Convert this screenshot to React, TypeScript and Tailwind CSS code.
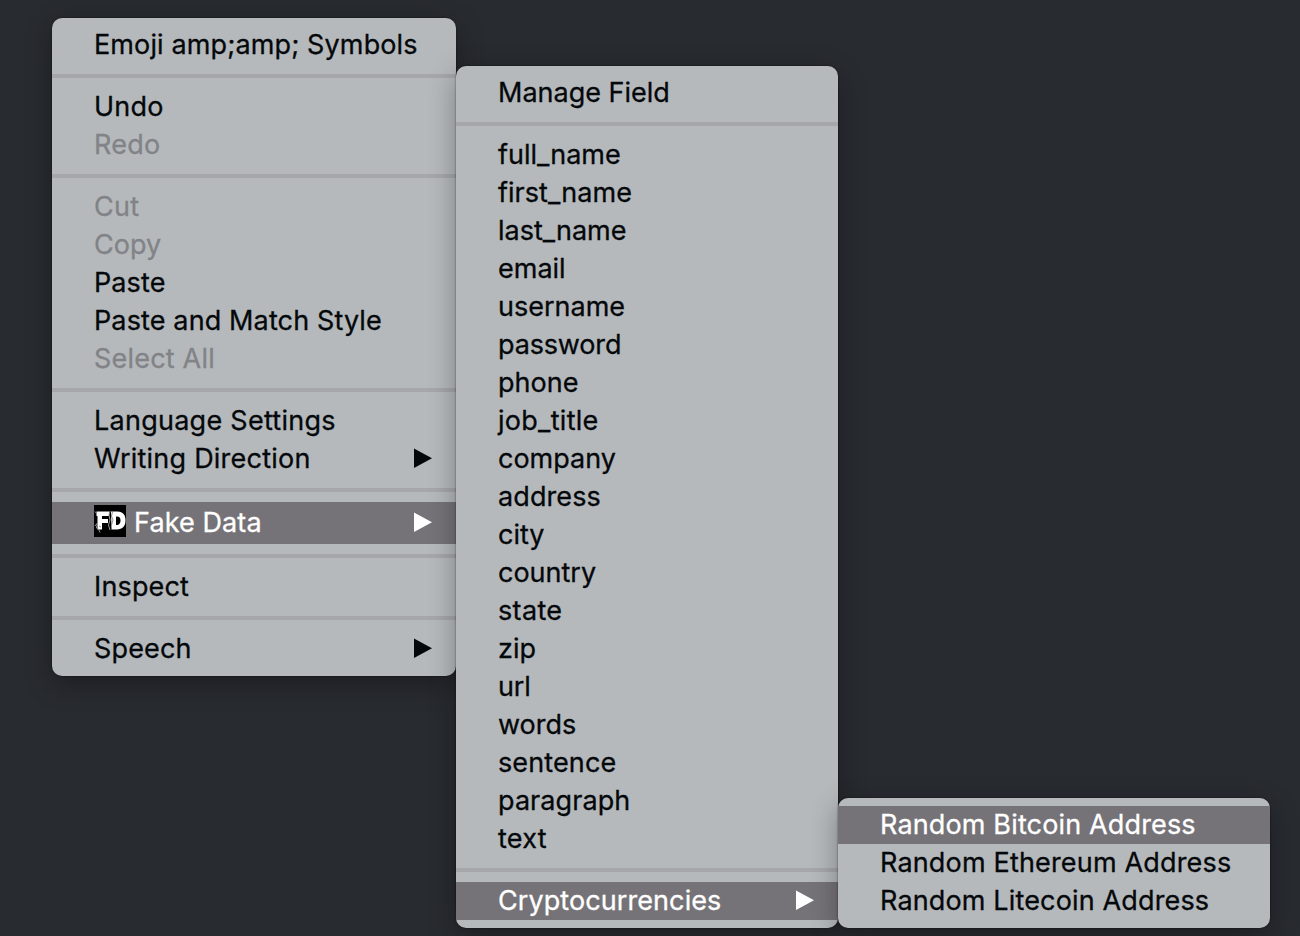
type Entry = {
  label?: string;
  track?: string;
  disabled?: boolean;
  active?: boolean;
  submenu?: boolean;
  logo?: boolean;
};

const SEP: Entry = {};

const mainMenu: Entry[] = [
  { label: 'Emoji amp;amp; Symbols', track: 'tracking-[0.12px]' },
  SEP,
  { label: 'Undo', track: 'tracking-[0.2px]' },
  { label: 'Redo', track: 'tracking-[0.25px]', disabled: true },
  SEP,
  { label: 'Cut', track: 'tracking-[0.3px]', disabled: true },
  { label: 'Copy', disabled: true },
  { label: 'Paste', track: 'tracking-[0.1px]' },
  { label: 'Paste and Match Style', track: 'tracking-[0.13px]' },
  { label: 'Select All', track: 'tracking-[0.2px]', disabled: true },
  SEP,
  { label: 'Language Settings', track: 'tracking-[0.26px]' },
  { label: 'Writing Direction', track: 'tracking-[0.23px]', submenu: true },
  SEP,
  { label: 'Fake Data', track: 'tracking-[0.1px]', submenu: true, active: true, logo: true },
  SEP,
  { label: 'Inspect', track: 'tracking-[0.15px]' },
  SEP,
  { label: 'Speech', track: 'tracking-[0.15px]', submenu: true },
];

const fieldMenu: Entry[] = [
  { label: 'Manage Field' },
  SEP,
  { label: 'full_name' },
  { label: 'first_name', track: 'tracking-[0.04px]' },
  { label: 'last_name' },
  { label: 'email' },
  { label: 'username' },
  { label: 'password', track: 'tracking-[-0.15px]' },
  { label: 'phone' },
  { label: 'job_title', track: 'tracking-[0.28px]' },
  { label: 'company' },
  { label: 'address', track: 'tracking-[0.1px]' },
  { label: 'city' },
  { label: 'country' },
  { label: 'state', track: 'tracking-[0.35px]' },
  { label: 'zip' },
  { label: 'url', track: 'tracking-[-0.2px]' },
  { label: 'words' },
  { label: 'sentence', track: 'tracking-[0.12px]' },
  { label: 'paragraph', track: 'tracking-[0.08px]' },
  { label: 'text', track: 'tracking-[0.25px]' },
  SEP,
  { label: 'Cryptocurrencies', track: 'tracking-[0.08px]', submenu: true, active: true },
];

const cryptoMenu: Entry[] = [
  { label: 'Random Bitcoin Address', track: 'tracking-[0.15px]', active: true },
  { label: 'Random Ethereum Address', track: 'tracking-[0.17px]' },
  { label: 'Random Litecoin Address', track: 'tracking-[0.15px]' },
];

function Logo() {
  return (
    <svg viewBox="0 0 32 32" className="mr-2 mb-1 h-8 w-8 shrink-0">
      <rect width="32" height="32" fill="#000" />
      <path d="M2.500 6.500H15V11H8v3h6v4H8v6.500H3.500V11H2.500z" fill="#fff" />
      <path d="M17 6.500h6.500C29 6.500 31.500 10 31.500 15.500S28.500 24.500 23 24.500h-5.500z" fill="#fff" />
      <path d="M22 11.500h1c2.500 0 3.500 1.200 3.500 4S25 20 23 20h-1z" fill="#000" />
      <path d="M1 6.500l1.500 2M1 21l2.500-3-1 5 2 1 1.500 3.500M16 6l-1 4 1 5-1.500 5 1.500 5" fill="none" stroke="#999" />
      <path d="M18.500 7l-1 4 1.500 4-1.500 5M5 21l2 1" fill="none" stroke="#777" strokeWidth=".8" />
    </svg>
  );
}

function Row({ entry }: { entry: Entry }) {
  if (!entry.label) {
    return <div className="my-2.5 h-1 shrink-0 bg-[#a5a7aa]" />;
  }
  const color = entry.active
    ? 'bg-[#757378] text-white'
    : entry.disabled
      ? 'text-[#828387]'
      : 'text-[#05080a]';
  return (
    <div className={`flex shrink-0 items-center pr-6 pl-[42px] ${entry.logo ? 'h-[42px]' : 'h-[38px]'} ${color}`}>
      {entry.logo && <Logo />}
      <span className={`whitespace-pre [-webkit-text-stroke:0.3px_currentColor] ${entry.track ?? ''}`}>
        {entry.label}
      </span>
      {entry.submenu && (
        <svg viewBox="0 0 18 20" className="mb-0.5 ml-auto h-5 w-[18px] shrink-0">
          <path d="M0 .5L18 10.200 0 19.900z" fill="currentColor" />
        </svg>
      )}
    </div>
  );
}

function Menu({ entries, className }: { entries: Entry[]; className: string }) {
  return (
    <div
      className={`relative isolate flex shrink-0 flex-col rounded-[10px] bg-[#b5b9bc] py-2 shadow-[0_0_2px_rgba(0,0,0,0.6),0_8px_28px_rgba(0,0,0,0.32)] ${className}`}
    >
      {entries.map((entry, i) => (
        <Row key={i} entry={entry} />
      ))}
    </div>
  );
}

export default function App() {
  return (
    <div className="flex h-[936px] w-[1300px] items-start overflow-hidden bg-[#282b30] pl-[52px] font-['Inter',sans-serif] text-[27px] leading-[38px]">
      <Menu entries={mainMenu} className="mt-[18px] w-[404px]" />
      <Menu entries={fieldMenu} className="mt-[66px] w-[382px]" />
      <Menu entries={cryptoMenu} className="mt-[798px] w-[432px]" />
    </div>
  );
}
